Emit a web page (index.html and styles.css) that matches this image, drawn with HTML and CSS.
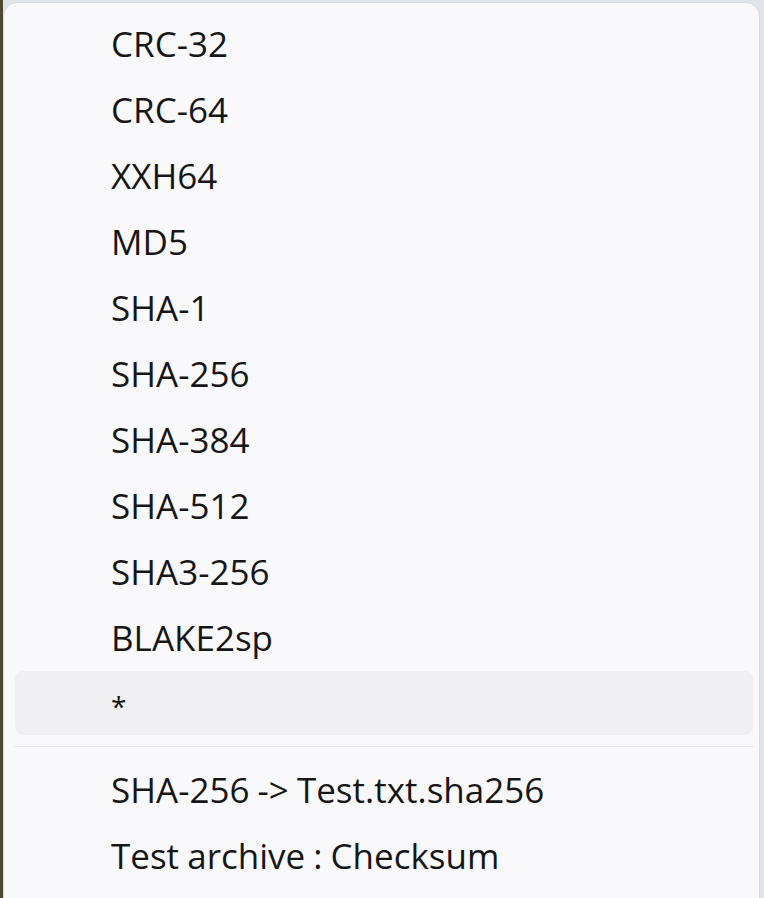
FILE: index.html
```html
<!DOCTYPE html>
<html lang="en">
<head>
<meta charset="utf-8">
<title>Checksum menu</title>
<link rel="stylesheet" href="styles.css">
</head>
<body>
<div class="menu">
  <div class="item">CRC-32</div>
  <div class="item">CRC-64</div>
  <div class="item">XXH64</div>
  <div class="item">MD5</div>
  <div class="item">SHA-1</div>
  <div class="item">SHA-256</div>
  <div class="item">SHA-384</div>
  <div class="item">SHA-512</div>
  <div class="item">SHA3-256</div>
  <div class="item">BLAKE2sp</div>
  <div class="item hover"><span class="star">*</span></div>
  <div class="separator"></div>
  <div class="item">SHA-256 -&gt; Test.txt.sha256</div>
  <div class="item">Test archive : Checksum</div>
</div>
</body>
</html>
```
FILE: styles.css
```css
html, body {
  margin: 0;
  padding: 0;
  height: 100%;
  overflow: hidden;
}
body {
  background: linear-gradient(to right, #4d4a32 0, #4d4a32 3px, #e1e5e9 3px);
  font-family: "Open Sans", "Noto Sans", "Liberation Sans", sans-serif;
}
.menu {
  margin: 2px 4px 0 3px;
  height: 920px;
  box-sizing: border-box;
  background: #f9f9fb;
  border: 1px solid #d9d9dc;
  border-radius: 14px;
  padding: 7px 6px 0 11px;
  display: flex;
  flex-direction: column;
}
.item {
  box-sizing: border-box;
  height: 64px;
  margin: 1px 0;
  padding: 1px 0 0 96px;
  border-radius: 8px;
  font-size: 35px;
  line-height: 64px;
  word-spacing: -1px;
  color: #161616;
  white-space: nowrap;
}
.item.hover {
  background: #f0f0f2;
}
.star {
  font-size: 28px;
}
.separator {
  height: 1px;
  background: #e3e3e5;
  margin: 10px 0 9px;
}
```
